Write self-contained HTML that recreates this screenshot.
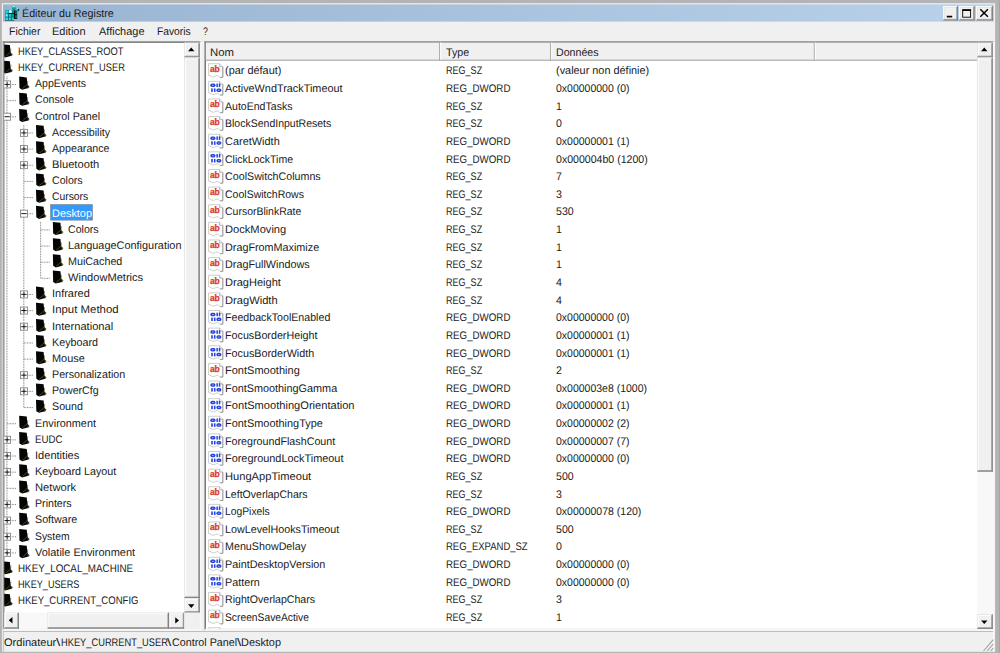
<!DOCTYPE html>
<html lang="fr"><head><meta charset="utf-8"><title>Éditeur du Registre</title>
<style>
html,body{margin:0;padding:0;}
body{width:1000px;height:653px;overflow:hidden;background:#b4b4b4;position:relative;font-family:"Liberation Sans",sans-serif;color:#1a1a1a;}
.t{position:absolute;white-space:pre;font-size:11px;line-height:12.65px;height:12.65px;transform-origin:0 0;display:block;}
svg{position:absolute;left:0;top:0;}
</style></head><body>
<svg width="1000" height="653" viewBox="0 0 1000 653">
<rect x="0.00" y="0.00" width="1000.00" height="653.00" fill="#b4b4b4"/>
<rect x="999.00" y="0.00" width="1.00" height="653.00" fill="#a6a6a6"/>
<rect x="1.90" y="3.20" width="993.20" height="648.60" fill="#f0f0f0"/>
<defs><linearGradient id="tg" x1="0" x2="1" y1="0" y2="0"><stop offset="0" stop-color="#99b4d1"/><stop offset="1" stop-color="#b9d1ea"/></linearGradient></defs>
<rect x="3" y="4.4" width="991" height="17.2" fill="url(#tg)"/>
<rect x="943.00" y="6.10" width="14.80" height="14.40" fill="#f0f0f0"/>
<rect x="943.00" y="6.10" width="14.00" height="0.80" fill="#fff"/>
<rect x="943.00" y="6.10" width="0.80" height="13.60" fill="#fff"/>
<rect x="943.80" y="6.90" width="12.40" height="0.80" fill="#e3e3e3"/>
<rect x="943.80" y="6.90" width="0.80" height="12.00" fill="#e3e3e3"/>
<rect x="956.20" y="6.90" width="0.80" height="12.80" fill="#a0a0a0"/>
<rect x="943.80" y="18.90" width="13.20" height="0.80" fill="#a0a0a0"/>
<rect x="957.00" y="6.10" width="0.80" height="14.40" fill="#696969"/>
<rect x="943.00" y="19.70" width="14.80" height="0.80" fill="#696969"/>
<rect x="959.00" y="6.10" width="15.60" height="14.40" fill="#f0f0f0"/>
<rect x="959.00" y="6.10" width="14.80" height="0.80" fill="#fff"/>
<rect x="959.00" y="6.10" width="0.80" height="13.60" fill="#fff"/>
<rect x="959.80" y="6.90" width="13.20" height="0.80" fill="#e3e3e3"/>
<rect x="959.80" y="6.90" width="0.80" height="12.00" fill="#e3e3e3"/>
<rect x="973.00" y="6.90" width="0.80" height="12.80" fill="#a0a0a0"/>
<rect x="959.80" y="18.90" width="14.00" height="0.80" fill="#a0a0a0"/>
<rect x="973.80" y="6.10" width="0.80" height="14.40" fill="#696969"/>
<rect x="959.00" y="19.70" width="15.60" height="0.80" fill="#696969"/>
<rect x="976.20" y="6.10" width="16.60" height="14.40" fill="#f0f0f0"/>
<rect x="976.20" y="6.10" width="15.80" height="0.80" fill="#fff"/>
<rect x="976.20" y="6.10" width="0.80" height="13.60" fill="#fff"/>
<rect x="977.00" y="6.90" width="14.20" height="0.80" fill="#e3e3e3"/>
<rect x="977.00" y="6.90" width="0.80" height="12.00" fill="#e3e3e3"/>
<rect x="991.20" y="6.90" width="0.80" height="12.80" fill="#a0a0a0"/>
<rect x="977.00" y="18.90" width="15.00" height="0.80" fill="#a0a0a0"/>
<rect x="992.00" y="6.10" width="0.80" height="14.40" fill="#696969"/>
<rect x="976.20" y="19.70" width="16.60" height="0.80" fill="#696969"/>
<path d="M946.8 16.6 h5.4" stroke="#000" stroke-width="1.7"/><rect x="962.7" y="10" width="7.9" height="7.2" fill="none" stroke="#000" stroke-width="0.9"/><path d="M962.25 10.1 h8.8" stroke="#000" stroke-width="1.7"/><path d="M980.3 9.3 l7.6 7.4 M987.9 9.3 l-7.6 7.4" stroke="#000" stroke-width="1.5"/>
<rect x="2.60" y="41.00" width="198.80" height="589.20" fill="#fff"/>
<rect x="2.60" y="41.00" width="198.80" height="0.90" fill="#a0a0a0"/>
<rect x="2.60" y="41.00" width="0.90" height="589.20" fill="#a0a0a0"/>
<rect x="3.50" y="41.90" width="197.00" height="0.90" fill="#696969"/>
<rect x="3.50" y="41.90" width="0.90" height="587.40" fill="#696969"/>
<rect x="199.60" y="41.90" width="0.90" height="587.40" fill="#e8e8e8"/>
<rect x="3.50" y="628.40" width="197.00" height="0.90" fill="#e8e8e8"/>
<rect x="200.50" y="41.00" width="0.90" height="589.20" fill="#f8f8f8"/>
<rect x="2.60" y="629.30" width="198.80" height="0.90" fill="#f8f8f8"/>
<rect x="204.20" y="41.00" width="790.10" height="589.40" fill="#fff"/>
<rect x="204.20" y="41.00" width="790.10" height="0.90" fill="#a0a0a0"/>
<rect x="204.20" y="41.00" width="0.90" height="589.40" fill="#a0a0a0"/>
<rect x="205.10" y="41.90" width="788.30" height="0.90" fill="#696969"/>
<rect x="205.10" y="41.90" width="0.90" height="587.60" fill="#696969"/>
<rect x="992.50" y="41.90" width="0.90" height="587.60" fill="#e8e8e8"/>
<rect x="205.10" y="628.60" width="788.30" height="0.90" fill="#e8e8e8"/>
<rect x="993.40" y="41.00" width="0.90" height="589.40" fill="#f8f8f8"/>
<rect x="204.20" y="629.50" width="790.10" height="0.90" fill="#f8f8f8"/>
<rect x="205.80" y="42.60" width="771.50" height="18.10" fill="#f0f0f0"/>
<rect x="205.80" y="59.70" width="771.50" height="1.00" fill="#a0a0a0"/>
<rect x="439.20" y="42.60" width="1.00" height="18.10" fill="#a0a0a0"/>
<rect x="440.20" y="42.60" width="1.00" height="17.10" fill="#fff"/>
<rect x="550.20" y="42.60" width="1.00" height="18.10" fill="#a0a0a0"/>
<rect x="551.20" y="42.60" width="1.00" height="17.10" fill="#fff"/>
<rect x="813.80" y="42.60" width="1.00" height="18.10" fill="#a0a0a0"/>
<rect x="814.80" y="42.60" width="1.00" height="17.10" fill="#fff"/>
<rect x="184.30" y="42.80" width="15.40" height="569.80" fill="#f8f8f8"/>
<rect x="184.30" y="42.80" width="15.40" height="14.50" fill="#f0f0f0"/>
<rect x="184.30" y="42.80" width="14.60" height="0.80" fill="#e3e3e3"/>
<rect x="184.30" y="42.80" width="0.80" height="13.70" fill="#e3e3e3"/>
<rect x="185.10" y="43.60" width="13.00" height="0.80" fill="#fff"/>
<rect x="185.10" y="43.60" width="0.80" height="12.10" fill="#fff"/>
<rect x="198.10" y="43.60" width="0.80" height="12.90" fill="#a0a0a0"/>
<rect x="185.10" y="55.70" width="13.80" height="0.80" fill="#a0a0a0"/>
<rect x="198.90" y="42.80" width="0.80" height="14.50" fill="#696969"/>
<rect x="184.30" y="56.50" width="15.40" height="0.80" fill="#696969"/>
<rect x="184.30" y="57.80" width="15.40" height="540.30" fill="#f0f0f0"/>
<rect x="184.30" y="57.80" width="14.60" height="0.80" fill="#e3e3e3"/>
<rect x="184.30" y="57.80" width="0.80" height="539.50" fill="#e3e3e3"/>
<rect x="185.10" y="58.60" width="13.00" height="0.80" fill="#fff"/>
<rect x="185.10" y="58.60" width="0.80" height="537.90" fill="#fff"/>
<rect x="198.10" y="58.60" width="0.80" height="538.70" fill="#a0a0a0"/>
<rect x="185.10" y="596.50" width="13.80" height="0.80" fill="#a0a0a0"/>
<rect x="198.90" y="57.80" width="0.80" height="540.30" fill="#696969"/>
<rect x="184.30" y="597.30" width="15.40" height="0.80" fill="#696969"/>
<rect x="184.30" y="598.10" width="15.40" height="14.50" fill="#f0f0f0"/>
<rect x="184.30" y="598.10" width="14.60" height="0.80" fill="#e3e3e3"/>
<rect x="184.30" y="598.10" width="0.80" height="13.70" fill="#e3e3e3"/>
<rect x="185.10" y="598.90" width="13.00" height="0.80" fill="#fff"/>
<rect x="185.10" y="598.90" width="0.80" height="12.10" fill="#fff"/>
<rect x="198.10" y="598.90" width="0.80" height="12.90" fill="#a0a0a0"/>
<rect x="185.10" y="611.00" width="13.80" height="0.80" fill="#a0a0a0"/>
<rect x="198.90" y="598.10" width="0.80" height="14.50" fill="#696969"/>
<rect x="184.30" y="611.80" width="15.40" height="0.80" fill="#696969"/>
<path d="M191.25 47.60 l3.20 3.70 h-6.40z" fill="#000"/>
<path d="M191.25 607.90 l3.20 -3.70 h-6.40z" fill="#000"/>
<rect x="977.30" y="42.80" width="15.40" height="586.00" fill="#f8f8f8"/>
<rect x="977.30" y="42.80" width="15.40" height="14.50" fill="#f0f0f0"/>
<rect x="977.30" y="42.80" width="14.60" height="0.80" fill="#e3e3e3"/>
<rect x="977.30" y="42.80" width="0.80" height="13.70" fill="#e3e3e3"/>
<rect x="978.10" y="43.60" width="13.00" height="0.80" fill="#fff"/>
<rect x="978.10" y="43.60" width="0.80" height="12.10" fill="#fff"/>
<rect x="991.10" y="43.60" width="0.80" height="12.90" fill="#a0a0a0"/>
<rect x="978.10" y="55.70" width="13.80" height="0.80" fill="#a0a0a0"/>
<rect x="991.90" y="42.80" width="0.80" height="14.50" fill="#696969"/>
<rect x="977.30" y="56.50" width="15.40" height="0.80" fill="#696969"/>
<rect x="977.30" y="57.80" width="15.40" height="413.80" fill="#f0f0f0"/>
<rect x="977.30" y="57.80" width="14.60" height="0.80" fill="#e3e3e3"/>
<rect x="977.30" y="57.80" width="0.80" height="413.00" fill="#e3e3e3"/>
<rect x="978.10" y="58.60" width="13.00" height="0.80" fill="#fff"/>
<rect x="978.10" y="58.60" width="0.80" height="411.40" fill="#fff"/>
<rect x="991.10" y="58.60" width="0.80" height="412.20" fill="#a0a0a0"/>
<rect x="978.10" y="470.00" width="13.80" height="0.80" fill="#a0a0a0"/>
<rect x="991.90" y="57.80" width="0.80" height="413.80" fill="#696969"/>
<rect x="977.30" y="470.80" width="15.40" height="0.80" fill="#696969"/>
<rect x="977.30" y="614.30" width="15.40" height="14.50" fill="#f0f0f0"/>
<rect x="977.30" y="614.30" width="14.60" height="0.80" fill="#e3e3e3"/>
<rect x="977.30" y="614.30" width="0.80" height="13.70" fill="#e3e3e3"/>
<rect x="978.10" y="615.10" width="13.00" height="0.80" fill="#fff"/>
<rect x="978.10" y="615.10" width="0.80" height="12.10" fill="#fff"/>
<rect x="991.10" y="615.10" width="0.80" height="12.90" fill="#a0a0a0"/>
<rect x="978.10" y="627.20" width="13.80" height="0.80" fill="#a0a0a0"/>
<rect x="991.90" y="614.30" width="0.80" height="14.50" fill="#696969"/>
<rect x="977.30" y="628.00" width="15.40" height="0.80" fill="#696969"/>
<path d="M984.25 47.60 l3.20 3.70 h-6.40z" fill="#000"/>
<path d="M984.25 624.10 l3.20 -3.70 h-6.40z" fill="#000"/>
<rect x="4.20" y="612.60" width="180.10" height="16.00" fill="#f8f8f8"/>
<rect x="4.20" y="612.60" width="14.70" height="16.00" fill="#f0f0f0"/>
<rect x="4.20" y="612.60" width="13.90" height="0.80" fill="#e3e3e3"/>
<rect x="4.20" y="612.60" width="0.80" height="15.20" fill="#e3e3e3"/>
<rect x="5.00" y="613.40" width="12.30" height="0.80" fill="#fff"/>
<rect x="5.00" y="613.40" width="0.80" height="13.60" fill="#fff"/>
<rect x="17.30" y="613.40" width="0.80" height="14.40" fill="#a0a0a0"/>
<rect x="5.00" y="627.00" width="13.10" height="0.80" fill="#a0a0a0"/>
<rect x="18.10" y="612.60" width="0.80" height="16.00" fill="#696969"/>
<rect x="4.20" y="627.80" width="14.70" height="0.80" fill="#696969"/>
<rect x="47.50" y="612.60" width="121.50" height="16.00" fill="#f0f0f0"/>
<rect x="47.50" y="612.60" width="120.70" height="0.80" fill="#e3e3e3"/>
<rect x="47.50" y="612.60" width="0.80" height="15.20" fill="#e3e3e3"/>
<rect x="48.30" y="613.40" width="119.10" height="0.80" fill="#fff"/>
<rect x="48.30" y="613.40" width="0.80" height="13.60" fill="#fff"/>
<rect x="167.40" y="613.40" width="0.80" height="14.40" fill="#a0a0a0"/>
<rect x="48.30" y="627.00" width="119.90" height="0.80" fill="#a0a0a0"/>
<rect x="168.20" y="612.60" width="0.80" height="16.00" fill="#696969"/>
<rect x="47.50" y="627.80" width="121.50" height="0.80" fill="#696969"/>
<rect x="169.00" y="612.60" width="15.30" height="16.00" fill="#f0f0f0"/>
<rect x="169.00" y="612.60" width="14.50" height="0.80" fill="#e3e3e3"/>
<rect x="169.00" y="612.60" width="0.80" height="15.20" fill="#e3e3e3"/>
<rect x="169.80" y="613.40" width="12.90" height="0.80" fill="#fff"/>
<rect x="169.80" y="613.40" width="0.80" height="13.60" fill="#fff"/>
<rect x="182.70" y="613.40" width="0.80" height="14.40" fill="#a0a0a0"/>
<rect x="169.80" y="627.00" width="13.70" height="0.80" fill="#a0a0a0"/>
<rect x="183.50" y="612.60" width="0.80" height="16.00" fill="#696969"/>
<rect x="169.00" y="627.80" width="15.30" height="0.80" fill="#696969"/>
<path d="M8.75 620.20 l3.70 3.20 v-6.40z" fill="#000"/>
<path d="M178.95 620.40 l-3.70 3.20 v-6.40z" fill="#000"/>
<rect x="184.30" y="612.60" width="15.50" height="16.00" fill="#f0f0f0"/>
<rect x="2.90" y="631.00" width="990.10" height="0.90" fill="#b8b8b8"/>
<rect x="2.90" y="631.00" width="0.80" height="20.80" fill="#b8b8b8"/>
<rect x="993.20" y="631.80" width="0.80" height="20.00" fill="#fff"/>
<path d="M983.5 651 L993.3 639.6 M987.2 651 L993.3 644 M990.8 651 L993.3 648.2" stroke="#a0a0a0" stroke-width="1.1" fill="none"/>
<defs><clipPath id="tc"><rect x="4.2" y="42.6" width="180.1" height="570"/></clipPath><g id="fold"><path d="M0.4 0.3 L8.0 1.1 L8.7 8.2 L10.4 10.4 L9.6 11.8 L3.4 13.4 L0.7 11.8Z" fill="#050505"/><path d="M8.8 8.6 L11.2 10.2 L10.2 12 L8.6 12.2Z" fill="#555" opacity=".5"/><path d="M3.6 12.4 L8.6 8.2" stroke="#55701a" stroke-width="0.7"/><path d="M8.6 8.2 L9 4.6" stroke="#7a3c14" stroke-width="0.6"/></g></defs>
<g clip-path="url(#tc)">
<path d="M6.95 76.51 L6.95 552.94" stroke="#6c6c6c" stroke-width="0.9" stroke-dasharray="0.85 0.765" fill="none"/>
<path d="M23.80 124.96 L23.80 407.57" stroke="#6c6c6c" stroke-width="0.9" stroke-dasharray="0.85 0.765" fill="none"/>
<path d="M40.65 221.88 L40.65 278.34" stroke="#6c6c6c" stroke-width="0.9" stroke-dasharray="0.85 0.765" fill="none"/>
<use href="#fold" x="1.90" y="44.00"/>
<use href="#fold" x="1.90" y="60.15"/>
<path d="M6.95 84.51 L16.15 84.51" stroke="#6c6c6c" stroke-width="0.9" stroke-dasharray="0.85 0.765" fill="none"/>
<use href="#fold" x="18.75" y="76.31"/>
<rect x="3.60" y="80.91" width="7" height="7" fill="#fff" stroke="#808080" stroke-width="0.85"/>
<path d="M4.40 84.41 h5.4" stroke="#000" stroke-width="0.9"/>
<path d="M7.10 81.71 v5.4" stroke="#000" stroke-width="0.9"/>
<path d="M6.95 100.66 L16.15 100.66" stroke="#6c6c6c" stroke-width="0.9" stroke-dasharray="0.85 0.765" fill="none"/>
<use href="#fold" x="18.75" y="92.46"/>
<path d="M6.95 116.81 L16.15 116.81" stroke="#6c6c6c" stroke-width="0.9" stroke-dasharray="0.85 0.765" fill="none"/>
<use href="#fold" x="18.75" y="108.61"/>
<rect x="3.60" y="113.21" width="7" height="7" fill="#fff" stroke="#808080" stroke-width="0.85"/>
<path d="M4.40 116.71 h5.4" stroke="#000" stroke-width="0.9"/>
<path d="M23.80 132.96 L33.00 132.96" stroke="#6c6c6c" stroke-width="0.9" stroke-dasharray="0.85 0.765" fill="none"/>
<use href="#fold" x="35.60" y="124.76"/>
<rect x="20.45" y="129.36" width="7" height="7" fill="#fff" stroke="#808080" stroke-width="0.85"/>
<path d="M21.25 132.86 h5.4" stroke="#000" stroke-width="0.9"/>
<path d="M23.95 130.16 v5.4" stroke="#000" stroke-width="0.9"/>
<path d="M23.80 149.12 L33.00 149.12" stroke="#6c6c6c" stroke-width="0.9" stroke-dasharray="0.85 0.765" fill="none"/>
<use href="#fold" x="35.60" y="140.92"/>
<rect x="20.45" y="145.52" width="7" height="7" fill="#fff" stroke="#808080" stroke-width="0.85"/>
<path d="M21.25 149.02 h5.4" stroke="#000" stroke-width="0.9"/>
<path d="M23.95 146.32 v5.4" stroke="#000" stroke-width="0.9"/>
<path d="M23.80 165.27 L33.00 165.27" stroke="#6c6c6c" stroke-width="0.9" stroke-dasharray="0.85 0.765" fill="none"/>
<use href="#fold" x="35.60" y="157.07"/>
<rect x="20.45" y="161.67" width="7" height="7" fill="#fff" stroke="#808080" stroke-width="0.85"/>
<path d="M21.25 165.17 h5.4" stroke="#000" stroke-width="0.9"/>
<path d="M23.95 162.47 v5.4" stroke="#000" stroke-width="0.9"/>
<path d="M23.80 181.42 L33.00 181.42" stroke="#6c6c6c" stroke-width="0.9" stroke-dasharray="0.85 0.765" fill="none"/>
<use href="#fold" x="35.60" y="173.22"/>
<path d="M23.80 197.58 L33.00 197.58" stroke="#6c6c6c" stroke-width="0.9" stroke-dasharray="0.85 0.765" fill="none"/>
<use href="#fold" x="35.60" y="189.38"/>
<path d="M23.80 213.73 L33.00 213.73" stroke="#6c6c6c" stroke-width="0.9" stroke-dasharray="0.85 0.765" fill="none"/>
<use href="#fold" x="35.60" y="205.53"/>
<rect x="20.45" y="210.13" width="7" height="7" fill="#fff" stroke="#808080" stroke-width="0.85"/>
<path d="M21.25 213.63 h5.4" stroke="#000" stroke-width="0.9"/>
<path d="M40.65 229.88 L49.85 229.88" stroke="#6c6c6c" stroke-width="0.9" stroke-dasharray="0.85 0.765" fill="none"/>
<use href="#fold" x="52.45" y="221.68"/>
<path d="M40.65 246.04 L49.85 246.04" stroke="#6c6c6c" stroke-width="0.9" stroke-dasharray="0.85 0.765" fill="none"/>
<use href="#fold" x="52.45" y="237.84"/>
<path d="M40.65 262.19 L49.85 262.19" stroke="#6c6c6c" stroke-width="0.9" stroke-dasharray="0.85 0.765" fill="none"/>
<use href="#fold" x="52.45" y="253.99"/>
<path d="M40.65 278.34 L49.85 278.34" stroke="#6c6c6c" stroke-width="0.9" stroke-dasharray="0.85 0.765" fill="none"/>
<use href="#fold" x="52.45" y="270.14"/>
<path d="M23.80 294.50 L33.00 294.50" stroke="#6c6c6c" stroke-width="0.9" stroke-dasharray="0.85 0.765" fill="none"/>
<use href="#fold" x="35.60" y="286.30"/>
<rect x="20.45" y="290.89" width="7" height="7" fill="#fff" stroke="#808080" stroke-width="0.85"/>
<path d="M21.25 294.39 h5.4" stroke="#000" stroke-width="0.9"/>
<path d="M23.95 291.69 v5.4" stroke="#000" stroke-width="0.9"/>
<path d="M23.80 310.65 L33.00 310.65" stroke="#6c6c6c" stroke-width="0.9" stroke-dasharray="0.85 0.765" fill="none"/>
<use href="#fold" x="35.60" y="302.45"/>
<rect x="20.45" y="307.05" width="7" height="7" fill="#fff" stroke="#808080" stroke-width="0.85"/>
<path d="M21.25 310.55 h5.4" stroke="#000" stroke-width="0.9"/>
<path d="M23.95 307.85 v5.4" stroke="#000" stroke-width="0.9"/>
<path d="M23.80 326.80 L33.00 326.80" stroke="#6c6c6c" stroke-width="0.9" stroke-dasharray="0.85 0.765" fill="none"/>
<use href="#fold" x="35.60" y="318.60"/>
<rect x="20.45" y="323.20" width="7" height="7" fill="#fff" stroke="#808080" stroke-width="0.85"/>
<path d="M21.25 326.70 h5.4" stroke="#000" stroke-width="0.9"/>
<path d="M23.95 324.00 v5.4" stroke="#000" stroke-width="0.9"/>
<path d="M23.80 342.95 L33.00 342.95" stroke="#6c6c6c" stroke-width="0.9" stroke-dasharray="0.85 0.765" fill="none"/>
<use href="#fold" x="35.60" y="334.75"/>
<path d="M23.80 359.11 L33.00 359.11" stroke="#6c6c6c" stroke-width="0.9" stroke-dasharray="0.85 0.765" fill="none"/>
<use href="#fold" x="35.60" y="350.91"/>
<path d="M23.80 375.26 L33.00 375.26" stroke="#6c6c6c" stroke-width="0.9" stroke-dasharray="0.85 0.765" fill="none"/>
<use href="#fold" x="35.60" y="367.06"/>
<rect x="20.45" y="371.66" width="7" height="7" fill="#fff" stroke="#808080" stroke-width="0.85"/>
<path d="M21.25 375.16 h5.4" stroke="#000" stroke-width="0.9"/>
<path d="M23.95 372.46 v5.4" stroke="#000" stroke-width="0.9"/>
<path d="M23.80 391.41 L33.00 391.41" stroke="#6c6c6c" stroke-width="0.9" stroke-dasharray="0.85 0.765" fill="none"/>
<use href="#fold" x="35.60" y="383.21"/>
<rect x="20.45" y="387.81" width="7" height="7" fill="#fff" stroke="#808080" stroke-width="0.85"/>
<path d="M21.25 391.31 h5.4" stroke="#000" stroke-width="0.9"/>
<path d="M23.95 388.61 v5.4" stroke="#000" stroke-width="0.9"/>
<path d="M23.80 407.57 L33.00 407.57" stroke="#6c6c6c" stroke-width="0.9" stroke-dasharray="0.85 0.765" fill="none"/>
<use href="#fold" x="35.60" y="399.37"/>
<path d="M6.95 423.72 L16.15 423.72" stroke="#6c6c6c" stroke-width="0.9" stroke-dasharray="0.85 0.765" fill="none"/>
<use href="#fold" x="18.75" y="415.52"/>
<path d="M6.95 439.87 L16.15 439.87" stroke="#6c6c6c" stroke-width="0.9" stroke-dasharray="0.85 0.765" fill="none"/>
<use href="#fold" x="18.75" y="431.67"/>
<rect x="3.60" y="436.27" width="7" height="7" fill="#fff" stroke="#808080" stroke-width="0.85"/>
<path d="M4.40 439.77 h5.4" stroke="#000" stroke-width="0.9"/>
<path d="M7.10 437.07 v5.4" stroke="#000" stroke-width="0.9"/>
<path d="M6.95 456.02 L16.15 456.02" stroke="#6c6c6c" stroke-width="0.9" stroke-dasharray="0.85 0.765" fill="none"/>
<use href="#fold" x="18.75" y="447.82"/>
<rect x="3.60" y="452.42" width="7" height="7" fill="#fff" stroke="#808080" stroke-width="0.85"/>
<path d="M4.40 455.92 h5.4" stroke="#000" stroke-width="0.9"/>
<path d="M7.10 453.22 v5.4" stroke="#000" stroke-width="0.9"/>
<path d="M6.95 472.18 L16.15 472.18" stroke="#6c6c6c" stroke-width="0.9" stroke-dasharray="0.85 0.765" fill="none"/>
<use href="#fold" x="18.75" y="463.98"/>
<rect x="3.60" y="468.58" width="7" height="7" fill="#fff" stroke="#808080" stroke-width="0.85"/>
<path d="M4.40 472.08 h5.4" stroke="#000" stroke-width="0.9"/>
<path d="M7.10 469.38 v5.4" stroke="#000" stroke-width="0.9"/>
<path d="M6.95 488.33 L16.15 488.33" stroke="#6c6c6c" stroke-width="0.9" stroke-dasharray="0.85 0.765" fill="none"/>
<use href="#fold" x="18.75" y="480.13"/>
<path d="M6.95 504.48 L16.15 504.48" stroke="#6c6c6c" stroke-width="0.9" stroke-dasharray="0.85 0.765" fill="none"/>
<use href="#fold" x="18.75" y="496.28"/>
<rect x="3.60" y="500.88" width="7" height="7" fill="#fff" stroke="#808080" stroke-width="0.85"/>
<path d="M4.40 504.38 h5.4" stroke="#000" stroke-width="0.9"/>
<path d="M7.10 501.68 v5.4" stroke="#000" stroke-width="0.9"/>
<path d="M6.95 520.64 L16.15 520.64" stroke="#6c6c6c" stroke-width="0.9" stroke-dasharray="0.85 0.765" fill="none"/>
<use href="#fold" x="18.75" y="512.44"/>
<rect x="3.60" y="517.04" width="7" height="7" fill="#fff" stroke="#808080" stroke-width="0.85"/>
<path d="M4.40 520.54 h5.4" stroke="#000" stroke-width="0.9"/>
<path d="M7.10 517.84 v5.4" stroke="#000" stroke-width="0.9"/>
<path d="M6.95 536.79 L16.15 536.79" stroke="#6c6c6c" stroke-width="0.9" stroke-dasharray="0.85 0.765" fill="none"/>
<use href="#fold" x="18.75" y="528.59"/>
<rect x="3.60" y="533.19" width="7" height="7" fill="#fff" stroke="#808080" stroke-width="0.85"/>
<path d="M4.40 536.69 h5.4" stroke="#000" stroke-width="0.9"/>
<path d="M7.10 533.99 v5.4" stroke="#000" stroke-width="0.9"/>
<path d="M6.95 552.94 L16.15 552.94" stroke="#6c6c6c" stroke-width="0.9" stroke-dasharray="0.85 0.765" fill="none"/>
<use href="#fold" x="18.75" y="544.74"/>
<rect x="3.60" y="549.34" width="7" height="7" fill="#fff" stroke="#808080" stroke-width="0.85"/>
<path d="M4.40 552.84 h5.4" stroke="#000" stroke-width="0.9"/>
<path d="M7.10 550.14 v5.4" stroke="#000" stroke-width="0.9"/>
<use href="#fold" x="1.90" y="560.90"/>
<use href="#fold" x="1.90" y="577.05"/>
<use href="#fold" x="1.90" y="593.20"/>
</g>
<rect x="50.3" y="204.3" width="42.4" height="16.1" fill="#3399ff"/><rect x="50.7" y="204.7" width="41.6" height="15.3" fill="none" stroke="#b87a3a" stroke-width="0.9" stroke-dasharray="0.85 0.765"/>
<defs>
<g id="pg"><path d="M0.4 0.4 H11.4 L14.6 3.4 V14.1 H12 C10.8 14.1 10.6 12.3 9.2 12.3 C7.4 12.4 6.8 13.7 5 13.7 C3.4 13.7 2.6 12 0.4 12 Z" fill="#fff" stroke="#c2c2c2" stroke-width="0.8"/><path d="M14.6 3.4 V14.1 H12" fill="none" stroke="#8c8c8c" stroke-width="0.8"/><path d="M11.4 0.4 V3.4 H14.6" fill="#f2f2f2" stroke="#a0a0a0" stroke-width="0.7"/></g>
<g id="bn" fill="#2443e2"><rect x="2.1" y="2.6" width="5.2" height="3.5" rx="1.7"/><rect x="4" y="3.9" width="1.4" height=".9" rx=".4" fill="#dfe6ff"/><rect x="8.2" y="2.6" width="1.5" height="3.5"/><rect x="10.6" y="2.6" width="1.5" height="3.5"/>
<rect x="3.0" y="7.5" width="1.6" height="3.5"/><rect x="5.7" y="7.5" width="1.6" height="3.5"/><rect x="8.2" y="7.5" width="5" height="3.5" rx="1.7"/><rect x="10" y="8.8" width="1.4" height=".9" rx=".4" fill="#dfe6ff"/></g>
</defs>
<use href="#pg" x="208.2" y="63.30"/>
<text x="209.9" y="72.00" font-family="Liberation Sans,sans-serif" font-weight="bold" font-size="8.2" fill="#d8391f" stroke="#d8391f" stroke-width=".25" textLength="9.9" lengthAdjust="spacingAndGlyphs">ab</text>
<use href="#pg" x="208.2" y="80.93"/>
<use href="#bn" x="208.2" y="80.93"/>
<use href="#pg" x="208.2" y="98.55"/>
<text x="209.9" y="107.25" font-family="Liberation Sans,sans-serif" font-weight="bold" font-size="8.2" fill="#d8391f" stroke="#d8391f" stroke-width=".25" textLength="9.9" lengthAdjust="spacingAndGlyphs">ab</text>
<use href="#pg" x="208.2" y="116.18"/>
<text x="209.9" y="124.88" font-family="Liberation Sans,sans-serif" font-weight="bold" font-size="8.2" fill="#d8391f" stroke="#d8391f" stroke-width=".25" textLength="9.9" lengthAdjust="spacingAndGlyphs">ab</text>
<use href="#pg" x="208.2" y="133.81"/>
<use href="#bn" x="208.2" y="133.81"/>
<use href="#pg" x="208.2" y="151.43"/>
<use href="#bn" x="208.2" y="151.43"/>
<use href="#pg" x="208.2" y="169.06"/>
<text x="209.9" y="177.76" font-family="Liberation Sans,sans-serif" font-weight="bold" font-size="8.2" fill="#d8391f" stroke="#d8391f" stroke-width=".25" textLength="9.9" lengthAdjust="spacingAndGlyphs">ab</text>
<use href="#pg" x="208.2" y="186.69"/>
<text x="209.9" y="195.39" font-family="Liberation Sans,sans-serif" font-weight="bold" font-size="8.2" fill="#d8391f" stroke="#d8391f" stroke-width=".25" textLength="9.9" lengthAdjust="spacingAndGlyphs">ab</text>
<use href="#pg" x="208.2" y="204.32"/>
<text x="209.9" y="213.02" font-family="Liberation Sans,sans-serif" font-weight="bold" font-size="8.2" fill="#d8391f" stroke="#d8391f" stroke-width=".25" textLength="9.9" lengthAdjust="spacingAndGlyphs">ab</text>
<use href="#pg" x="208.2" y="221.94"/>
<text x="209.9" y="230.64" font-family="Liberation Sans,sans-serif" font-weight="bold" font-size="8.2" fill="#d8391f" stroke="#d8391f" stroke-width=".25" textLength="9.9" lengthAdjust="spacingAndGlyphs">ab</text>
<use href="#pg" x="208.2" y="239.57"/>
<text x="209.9" y="248.27" font-family="Liberation Sans,sans-serif" font-weight="bold" font-size="8.2" fill="#d8391f" stroke="#d8391f" stroke-width=".25" textLength="9.9" lengthAdjust="spacingAndGlyphs">ab</text>
<use href="#pg" x="208.2" y="257.20"/>
<text x="209.9" y="265.90" font-family="Liberation Sans,sans-serif" font-weight="bold" font-size="8.2" fill="#d8391f" stroke="#d8391f" stroke-width=".25" textLength="9.9" lengthAdjust="spacingAndGlyphs">ab</text>
<use href="#pg" x="208.2" y="274.82"/>
<text x="209.9" y="283.52" font-family="Liberation Sans,sans-serif" font-weight="bold" font-size="8.2" fill="#d8391f" stroke="#d8391f" stroke-width=".25" textLength="9.9" lengthAdjust="spacingAndGlyphs">ab</text>
<use href="#pg" x="208.2" y="292.45"/>
<text x="209.9" y="301.15" font-family="Liberation Sans,sans-serif" font-weight="bold" font-size="8.2" fill="#d8391f" stroke="#d8391f" stroke-width=".25" textLength="9.9" lengthAdjust="spacingAndGlyphs">ab</text>
<use href="#pg" x="208.2" y="310.08"/>
<use href="#bn" x="208.2" y="310.08"/>
<use href="#pg" x="208.2" y="327.70"/>
<use href="#bn" x="208.2" y="327.70"/>
<use href="#pg" x="208.2" y="345.33"/>
<use href="#bn" x="208.2" y="345.33"/>
<use href="#pg" x="208.2" y="362.96"/>
<text x="209.9" y="371.66" font-family="Liberation Sans,sans-serif" font-weight="bold" font-size="8.2" fill="#d8391f" stroke="#d8391f" stroke-width=".25" textLength="9.9" lengthAdjust="spacingAndGlyphs">ab</text>
<use href="#pg" x="208.2" y="380.59"/>
<use href="#bn" x="208.2" y="380.59"/>
<use href="#pg" x="208.2" y="398.21"/>
<use href="#bn" x="208.2" y="398.21"/>
<use href="#pg" x="208.2" y="415.84"/>
<use href="#bn" x="208.2" y="415.84"/>
<use href="#pg" x="208.2" y="433.47"/>
<use href="#bn" x="208.2" y="433.47"/>
<use href="#pg" x="208.2" y="451.09"/>
<use href="#bn" x="208.2" y="451.09"/>
<use href="#pg" x="208.2" y="468.72"/>
<text x="209.9" y="477.42" font-family="Liberation Sans,sans-serif" font-weight="bold" font-size="8.2" fill="#d8391f" stroke="#d8391f" stroke-width=".25" textLength="9.9" lengthAdjust="spacingAndGlyphs">ab</text>
<use href="#pg" x="208.2" y="486.35"/>
<text x="209.9" y="495.05" font-family="Liberation Sans,sans-serif" font-weight="bold" font-size="8.2" fill="#d8391f" stroke="#d8391f" stroke-width=".25" textLength="9.9" lengthAdjust="spacingAndGlyphs">ab</text>
<use href="#pg" x="208.2" y="503.97"/>
<use href="#bn" x="208.2" y="503.97"/>
<use href="#pg" x="208.2" y="521.60"/>
<text x="209.9" y="530.30" font-family="Liberation Sans,sans-serif" font-weight="bold" font-size="8.2" fill="#d8391f" stroke="#d8391f" stroke-width=".25" textLength="9.9" lengthAdjust="spacingAndGlyphs">ab</text>
<use href="#pg" x="208.2" y="539.23"/>
<text x="209.9" y="547.93" font-family="Liberation Sans,sans-serif" font-weight="bold" font-size="8.2" fill="#d8391f" stroke="#d8391f" stroke-width=".25" textLength="9.9" lengthAdjust="spacingAndGlyphs">ab</text>
<use href="#pg" x="208.2" y="556.86"/>
<use href="#bn" x="208.2" y="556.86"/>
<use href="#pg" x="208.2" y="574.48"/>
<use href="#bn" x="208.2" y="574.48"/>
<use href="#pg" x="208.2" y="592.11"/>
<text x="209.9" y="600.81" font-family="Liberation Sans,sans-serif" font-weight="bold" font-size="8.2" fill="#d8391f" stroke="#d8391f" stroke-width=".25" textLength="9.9" lengthAdjust="spacingAndGlyphs">ab</text>
<use href="#pg" x="208.2" y="609.74"/>
<text x="209.9" y="618.44" font-family="Liberation Sans,sans-serif" font-weight="bold" font-size="8.2" fill="#d8391f" stroke="#d8391f" stroke-width=".25" textLength="9.9" lengthAdjust="spacingAndGlyphs">ab</text>
<clipPath id="lc"><rect x="205" y="60" width="772" height="568.8"/></clipPath><g clip-path="url(#lc)"><use href="#pg" x="208.2" y="627.36"/></g>
<g>
<rect x="5.2" y="20.2" width="9.2" height=".7" fill="#3a4650"/>
<rect x="5.3" y="9.9" width="8.7" height="10.4" fill="#0f8a8d"/>
<rect x="13.8" y="10.4" width="3.4" height="8.6" fill="#031416"/>
<rect x="8.4" y="12.9" width="5.8" height="1.1" fill="#041a1c"/><rect x="5.3" y="16.7" width="8.6" height=".8" fill="#0a5558"/>
<rect x="8.2" y="13.5" width=".8" height="6.6" fill="#0a5558"/><rect x="11.1" y="13.5" width=".8" height="6.6" fill="#0a4a4d"/>
<rect x="5.7" y="10.3" width="2.8" height="2.8" fill="#19d2d2"/><rect x="9.1" y="10.2" width="2.6" height="2.7" fill="#e9ffff"/><rect x="12.2" y="10.4" width="1.7" height="2.4" fill="#0c8f92"/>
<rect x="5.7" y="14" width="2.5" height="2.7" fill="#21dada"/><rect x="6.2" y="14.6" width="1" height="1" fill="#fff"/><rect x="9" y="14" width="2.2" height="2.7" fill="#18cfd0"/><rect x="11.9" y="14" width="1.9" height="2.7" fill="#0c9a9c"/>
<rect x="5.8" y="17.5" width="2.4" height="2.5" fill="#22dede"/><rect x="8.9" y="17.5" width="2.2" height="2.5" fill="#16d6d6"/><rect x="11.8" y="17.5" width="2.1" height="2.5" fill="#18dcdc"/>
<rect x="15.2" y="11.4" width="1.7" height="2.8" fill="#0a7f82"/><rect x="15.2" y="15.2" width="1.7" height="3" fill="#0a7275"/>
<rect x="12.1" y="6.2" width="3.7" height="3" rx=".8" fill="#14b9bb"/><rect x="12.9" y="6" width="1.8" height="1" fill="#cfeff0"/><rect x="12.3" y="8.6" width="3.4" height="1" fill="#0a5f63"/>
<rect x="16.3" y="8.3" width="2.8" height="2.9" rx=".6" fill="#16b4b6"/><rect x="17.9" y="8.9" width="1.3" height="2.2" fill="#075458"/><rect x="16.8" y="8" width="1.4" height=".8" fill="#c8e8ea"/>
</g>
</svg>
<span class="t" style="left:22.10px;top:7.46px;transform:scaleX(0.9746) skewX(.05deg);">Éditeur du Registre</span>
<span class="t" style="left:9.00px;top:25.06px;transform:scaleX(0.9504) skewX(.05deg);">Fichier</span>
<span class="t" style="left:52.20px;top:25.06px;transform:scaleX(0.9969) skewX(.05deg);">Edition</span>
<span class="t" style="left:98.60px;top:25.06px;transform:scaleX(0.9956) skewX(.05deg);">Affichage</span>
<span class="t" style="left:157.00px;top:25.06px;transform:scaleX(0.9323) skewX(.05deg);">Favoris</span>
<span class="t" style="left:203.00px;top:25.06px;transform:scaleX(0.8008) skewX(.05deg);">?</span>
<div style="position:absolute;left:4.2px;top:42.6px;width:180.1px;height:570px;overflow:hidden;"><div style="position:absolute;left:-4.2px;top:-42.6px;">
<span class="t" style="left:17.90px;top:45.01px;transform:scaleX(0.8450) skewX(.05deg);">HKEY_CLASSES_ROOT</span>
<span class="t" style="left:17.90px;top:61.17px;transform:scaleX(0.8448) skewX(.05deg);">HKEY_CURRENT_USER</span>
<span class="t" style="left:34.60px;top:77.32px;transform:scaleX(0.9567) skewX(.05deg);">AppEvents</span>
<span class="t" style="left:34.60px;top:93.47px;transform:scaleX(0.9601) skewX(.05deg);">Console</span>
<span class="t" style="left:34.60px;top:109.63px;transform:scaleX(0.9771) skewX(.05deg);">Control Panel</span>
<span class="t" style="left:51.50px;top:125.78px;transform:scaleX(0.9704) skewX(.05deg);">Accessibility</span>
<span class="t" style="left:51.50px;top:141.93px;transform:scaleX(0.9689) skewX(.05deg);">Appearance</span>
<span class="t" style="left:51.50px;top:158.08px;transform:scaleX(1.0153) skewX(.05deg);">Bluetooth</span>
<span class="t" style="left:51.50px;top:174.24px;transform:scaleX(0.9646) skewX(.05deg);">Colors</span>
<span class="t" style="left:51.50px;top:190.39px;transform:scaleX(0.9407) skewX(.05deg);">Cursors</span>
<span class="t" style="left:51.50px;top:206.54px;transform:scaleX(0.9908) skewX(.05deg);color:#fff;">Desktop</span>
<span class="t" style="left:68.40px;top:222.70px;transform:scaleX(0.9646) skewX(.05deg);">Colors</span>
<span class="t" style="left:68.40px;top:238.85px;transform:scaleX(0.9922) skewX(.05deg);">LanguageConfiguration</span>
<span class="t" style="left:68.40px;top:255.00px;transform:scaleX(0.9764) skewX(.05deg);">MuiCached</span>
<span class="t" style="left:68.40px;top:271.16px;transform:scaleX(1.0076) skewX(.05deg);">WindowMetrics</span>
<span class="t" style="left:51.50px;top:287.31px;transform:scaleX(0.9973) skewX(.05deg);">Infrared</span>
<span class="t" style="left:51.50px;top:303.46px;transform:scaleX(1.0375) skewX(.05deg);">Input Method</span>
<span class="t" style="left:51.50px;top:319.61px;transform:scaleX(1.0104) skewX(.05deg);">International</span>
<span class="t" style="left:51.50px;top:335.77px;transform:scaleX(0.9758) skewX(.05deg);">Keyboard</span>
<span class="t" style="left:51.50px;top:351.92px;transform:scaleX(0.9918) skewX(.05deg);">Mouse</span>
<span class="t" style="left:51.50px;top:368.07px;transform:scaleX(0.9727) skewX(.05deg);">Personalization</span>
<span class="t" style="left:51.50px;top:384.23px;transform:scaleX(0.9640) skewX(.05deg);">PowerCfg</span>
<span class="t" style="left:51.50px;top:400.38px;transform:scaleX(0.9740) skewX(.05deg);">Sound</span>
<span class="t" style="left:34.60px;top:416.53px;transform:scaleX(0.9871) skewX(.05deg);">Environment</span>
<span class="t" style="left:34.60px;top:432.69px;transform:scaleX(0.8809) skewX(.05deg);">EUDC</span>
<span class="t" style="left:34.60px;top:448.84px;transform:scaleX(1.0057) skewX(.05deg);">Identities</span>
<span class="t" style="left:34.60px;top:464.99px;transform:scaleX(0.9763) skewX(.05deg);">Keyboard Layout</span>
<span class="t" style="left:34.60px;top:481.14px;transform:scaleX(1.0194) skewX(.05deg);">Network</span>
<span class="t" style="left:34.60px;top:497.30px;transform:scaleX(0.9660) skewX(.05deg);">Printers</span>
<span class="t" style="left:34.60px;top:513.45px;transform:scaleX(0.9744) skewX(.05deg);">Software</span>
<span class="t" style="left:34.60px;top:529.60px;transform:scaleX(0.9417) skewX(.05deg);">System</span>
<span class="t" style="left:34.60px;top:545.76px;transform:scaleX(0.9979) skewX(.05deg);">Volatile Environment</span>
<span class="t" style="left:17.90px;top:561.91px;transform:scaleX(0.8922) skewX(.05deg);">HKEY_LOCAL_MACHINE</span>
<span class="t" style="left:17.90px;top:578.06px;transform:scaleX(0.8297) skewX(.05deg);">HKEY_USERS</span>
<span class="t" style="left:17.90px;top:594.22px;transform:scaleX(0.8682) skewX(.05deg);">HKEY_CURRENT_CONFIG</span>
</div></div>
<span class="t" style="left:209.90px;top:46.46px;transform:scaleX(1.0324) skewX(.05deg);">Nom</span>
<span class="t" style="left:445.80px;top:46.46px;transform:scaleX(0.9706) skewX(.05deg);">Type</span>
<span class="t" style="left:556.00px;top:46.46px;transform:scaleX(0.9649) skewX(.05deg);">Données</span>
<span class="t" style="left:224.50px;top:64.46px;transform:scaleX(0.9914) skewX(.05deg);">(par défaut)</span>
<span class="t" style="left:446.00px;top:64.46px;transform:scaleX(0.8211) skewX(.05deg);">REG_SZ</span>
<span class="t" style="left:556.00px;top:64.46px;transform:scaleX(0.9899) skewX(.05deg);">(valeur non définie)</span>
<span class="t" style="left:224.50px;top:82.09px;transform:scaleX(0.9880) skewX(.05deg);">ActiveWndTrackTimeout</span>
<span class="t" style="left:446.00px;top:82.09px;transform:scaleX(0.8860) skewX(.05deg);">REG_DWORD</span>
<span class="t" style="left:556.00px;top:82.09px;transform:scaleX(0.9541) skewX(.05deg);">0x00000000 (0)</span>
<span class="t" style="left:224.50px;top:99.72px;transform:scaleX(0.9593) skewX(.05deg);">AutoEndTasks</span>
<span class="t" style="left:446.00px;top:99.72px;transform:scaleX(0.8211) skewX(.05deg);">REG_SZ</span>
<span class="t" style="left:556.00px;top:99.72px;transform:scaleX(0.9631) skewX(.05deg);">1</span>
<span class="t" style="left:224.50px;top:117.34px;transform:scaleX(0.9548) skewX(.05deg);">BlockSendInputResets</span>
<span class="t" style="left:446.00px;top:117.34px;transform:scaleX(0.8211) skewX(.05deg);">REG_SZ</span>
<span class="t" style="left:556.00px;top:117.34px;transform:scaleX(0.9631) skewX(.05deg);">0</span>
<span class="t" style="left:224.50px;top:134.97px;transform:scaleX(0.9946) skewX(.05deg);">CaretWidth</span>
<span class="t" style="left:446.00px;top:134.97px;transform:scaleX(0.8860) skewX(.05deg);">REG_DWORD</span>
<span class="t" style="left:556.00px;top:134.97px;transform:scaleX(0.9541) skewX(.05deg);">0x00000001 (1)</span>
<span class="t" style="left:224.50px;top:152.60px;transform:scaleX(0.9571) skewX(.05deg);">ClickLockTime</span>
<span class="t" style="left:446.00px;top:152.60px;transform:scaleX(0.8860) skewX(.05deg);">REG_DWORD</span>
<span class="t" style="left:556.00px;top:152.60px;transform:scaleX(0.9614) skewX(.05deg);">0x000004b0 (1200)</span>
<span class="t" style="left:224.50px;top:170.23px;transform:scaleX(0.9722) skewX(.05deg);">CoolSwitchColumns</span>
<span class="t" style="left:446.00px;top:170.23px;transform:scaleX(0.8211) skewX(.05deg);">REG_SZ</span>
<span class="t" style="left:556.00px;top:170.23px;transform:scaleX(0.9631) skewX(.05deg);">7</span>
<span class="t" style="left:224.50px;top:187.85px;transform:scaleX(0.9569) skewX(.05deg);">CoolSwitchRows</span>
<span class="t" style="left:446.00px;top:187.85px;transform:scaleX(0.8211) skewX(.05deg);">REG_SZ</span>
<span class="t" style="left:556.00px;top:187.85px;transform:scaleX(0.9631) skewX(.05deg);">3</span>
<span class="t" style="left:224.50px;top:205.48px;transform:scaleX(0.9524) skewX(.05deg);">CursorBlinkRate</span>
<span class="t" style="left:446.00px;top:205.48px;transform:scaleX(0.8211) skewX(.05deg);">REG_SZ</span>
<span class="t" style="left:556.00px;top:205.48px;transform:scaleX(0.9631) skewX(.05deg);">530</span>
<span class="t" style="left:224.50px;top:223.11px;transform:scaleX(1.0120) skewX(.05deg);">DockMoving</span>
<span class="t" style="left:446.00px;top:223.11px;transform:scaleX(0.8211) skewX(.05deg);">REG_SZ</span>
<span class="t" style="left:556.00px;top:223.11px;transform:scaleX(0.9631) skewX(.05deg);">1</span>
<span class="t" style="left:224.50px;top:240.73px;transform:scaleX(0.9810) skewX(.05deg);">DragFromMaximize</span>
<span class="t" style="left:446.00px;top:240.73px;transform:scaleX(0.8211) skewX(.05deg);">REG_SZ</span>
<span class="t" style="left:556.00px;top:240.73px;transform:scaleX(0.9631) skewX(.05deg);">1</span>
<span class="t" style="left:224.50px;top:258.36px;transform:scaleX(0.9822) skewX(.05deg);">DragFullWindows</span>
<span class="t" style="left:446.00px;top:258.36px;transform:scaleX(0.8211) skewX(.05deg);">REG_SZ</span>
<span class="t" style="left:556.00px;top:258.36px;transform:scaleX(0.9631) skewX(.05deg);">1</span>
<span class="t" style="left:224.50px;top:275.99px;transform:scaleX(1.0042) skewX(.05deg);">DragHeight</span>
<span class="t" style="left:446.00px;top:275.99px;transform:scaleX(0.8211) skewX(.05deg);">REG_SZ</span>
<span class="t" style="left:556.00px;top:275.99px;transform:scaleX(0.9631) skewX(.05deg);">4</span>
<span class="t" style="left:224.50px;top:293.61px;transform:scaleX(1.0127) skewX(.05deg);">DragWidth</span>
<span class="t" style="left:446.00px;top:293.61px;transform:scaleX(0.8211) skewX(.05deg);">REG_SZ</span>
<span class="t" style="left:556.00px;top:293.61px;transform:scaleX(0.9631) skewX(.05deg);">4</span>
<span class="t" style="left:224.50px;top:311.24px;transform:scaleX(0.9675) skewX(.05deg);">FeedbackToolEnabled</span>
<span class="t" style="left:446.00px;top:311.24px;transform:scaleX(0.8860) skewX(.05deg);">REG_DWORD</span>
<span class="t" style="left:556.00px;top:311.24px;transform:scaleX(0.9541) skewX(.05deg);">0x00000000 (0)</span>
<span class="t" style="left:224.50px;top:328.87px;transform:scaleX(0.9754) skewX(.05deg);">FocusBorderHeight</span>
<span class="t" style="left:446.00px;top:328.87px;transform:scaleX(0.8860) skewX(.05deg);">REG_DWORD</span>
<span class="t" style="left:556.00px;top:328.87px;transform:scaleX(0.9541) skewX(.05deg);">0x00000001 (1)</span>
<span class="t" style="left:224.50px;top:346.50px;transform:scaleX(0.9791) skewX(.05deg);">FocusBorderWidth</span>
<span class="t" style="left:446.00px;top:346.50px;transform:scaleX(0.8860) skewX(.05deg);">REG_DWORD</span>
<span class="t" style="left:556.00px;top:346.50px;transform:scaleX(0.9541) skewX(.05deg);">0x00000001 (1)</span>
<span class="t" style="left:224.50px;top:364.12px;transform:scaleX(1.0020) skewX(.05deg);">FontSmoothing</span>
<span class="t" style="left:446.00px;top:364.12px;transform:scaleX(0.8211) skewX(.05deg);">REG_SZ</span>
<span class="t" style="left:556.00px;top:364.12px;transform:scaleX(0.9631) skewX(.05deg);">2</span>
<span class="t" style="left:224.50px;top:381.75px;transform:scaleX(0.9864) skewX(.05deg);">FontSmoothingGamma</span>
<span class="t" style="left:446.00px;top:381.75px;transform:scaleX(0.8860) skewX(.05deg);">REG_DWORD</span>
<span class="t" style="left:556.00px;top:381.75px;transform:scaleX(0.9540) skewX(.05deg);">0x000003e8 (1000)</span>
<span class="t" style="left:224.50px;top:399.38px;transform:scaleX(1.0087) skewX(.05deg);">FontSmoothingOrientation</span>
<span class="t" style="left:446.00px;top:399.38px;transform:scaleX(0.8860) skewX(.05deg);">REG_DWORD</span>
<span class="t" style="left:556.00px;top:399.38px;transform:scaleX(0.9541) skewX(.05deg);">0x00000001 (1)</span>
<span class="t" style="left:224.50px;top:417.00px;transform:scaleX(0.9944) skewX(.05deg);">FontSmoothingType</span>
<span class="t" style="left:446.00px;top:417.00px;transform:scaleX(0.8860) skewX(.05deg);">REG_DWORD</span>
<span class="t" style="left:556.00px;top:417.00px;transform:scaleX(0.9541) skewX(.05deg);">0x00000002 (2)</span>
<span class="t" style="left:224.50px;top:434.63px;transform:scaleX(0.9745) skewX(.05deg);">ForegroundFlashCount</span>
<span class="t" style="left:446.00px;top:434.63px;transform:scaleX(0.8860) skewX(.05deg);">REG_DWORD</span>
<span class="t" style="left:556.00px;top:434.63px;transform:scaleX(0.9541) skewX(.05deg);">0x00000007 (7)</span>
<span class="t" style="left:224.50px;top:452.26px;transform:scaleX(0.9918) skewX(.05deg);">ForegroundLockTimeout</span>
<span class="t" style="left:446.00px;top:452.26px;transform:scaleX(0.8860) skewX(.05deg);">REG_DWORD</span>
<span class="t" style="left:556.00px;top:452.26px;transform:scaleX(0.9541) skewX(.05deg);">0x00000000 (0)</span>
<span class="t" style="left:224.50px;top:469.88px;transform:scaleX(1.0118) skewX(.05deg);">HungAppTimeout</span>
<span class="t" style="left:446.00px;top:469.88px;transform:scaleX(0.8211) skewX(.05deg);">REG_SZ</span>
<span class="t" style="left:556.00px;top:469.88px;transform:scaleX(0.9631) skewX(.05deg);">500</span>
<span class="t" style="left:224.50px;top:487.51px;transform:scaleX(0.9575) skewX(.05deg);">LeftOverlapChars</span>
<span class="t" style="left:446.00px;top:487.51px;transform:scaleX(0.8211) skewX(.05deg);">REG_SZ</span>
<span class="t" style="left:556.00px;top:487.51px;transform:scaleX(0.9631) skewX(.05deg);">3</span>
<span class="t" style="left:224.50px;top:505.14px;transform:scaleX(0.9385) skewX(.05deg);">LogPixels</span>
<span class="t" style="left:446.00px;top:505.14px;transform:scaleX(0.8860) skewX(.05deg);">REG_DWORD</span>
<span class="t" style="left:556.00px;top:505.14px;transform:scaleX(0.9554) skewX(.05deg);">0x00000078 (120)</span>
<span class="t" style="left:224.50px;top:522.77px;transform:scaleX(0.9770) skewX(.05deg);">LowLevelHooksTimeout</span>
<span class="t" style="left:446.00px;top:522.77px;transform:scaleX(0.8211) skewX(.05deg);">REG_SZ</span>
<span class="t" style="left:556.00px;top:522.77px;transform:scaleX(0.9631) skewX(.05deg);">500</span>
<span class="t" style="left:224.50px;top:540.39px;transform:scaleX(0.9743) skewX(.05deg);">MenuShowDelay</span>
<span class="t" style="left:446.00px;top:540.39px;transform:scaleX(0.8638) skewX(.05deg);">REG_EXPAND_SZ</span>
<span class="t" style="left:556.00px;top:540.39px;transform:scaleX(0.9631) skewX(.05deg);">0</span>
<span class="t" style="left:224.50px;top:558.02px;transform:scaleX(0.9829) skewX(.05deg);">PaintDesktopVersion</span>
<span class="t" style="left:446.00px;top:558.02px;transform:scaleX(0.8860) skewX(.05deg);">REG_DWORD</span>
<span class="t" style="left:556.00px;top:558.02px;transform:scaleX(0.9541) skewX(.05deg);">0x00000000 (0)</span>
<span class="t" style="left:224.50px;top:575.65px;transform:scaleX(0.9810) skewX(.05deg);">Pattern</span>
<span class="t" style="left:446.00px;top:575.65px;transform:scaleX(0.8860) skewX(.05deg);">REG_DWORD</span>
<span class="t" style="left:556.00px;top:575.65px;transform:scaleX(0.9541) skewX(.05deg);">0x00000000 (0)</span>
<span class="t" style="left:224.50px;top:593.27px;transform:scaleX(0.9628) skewX(.05deg);">RightOverlapChars</span>
<span class="t" style="left:446.00px;top:593.27px;transform:scaleX(0.8211) skewX(.05deg);">REG_SZ</span>
<span class="t" style="left:556.00px;top:593.27px;transform:scaleX(0.9631) skewX(.05deg);">3</span>
<span class="t" style="left:224.50px;top:610.90px;transform:scaleX(0.9342) skewX(.05deg);">ScreenSaveActive</span>
<span class="t" style="left:446.00px;top:610.90px;transform:scaleX(0.8211) skewX(.05deg);">REG_SZ</span>
<span class="t" style="left:556.00px;top:610.90px;transform:scaleX(0.9631) skewX(.05deg);">1</span>
<span class="t" style="left:4.40px;top:635.86px;transform:scaleX(1.0052) skewX(.05deg);">Ordinateur</span><span class="t" style="left:56.04px;top:635.86px;transform:scaleX(1.3919) skewX(.05deg);">\</span><span class="t" style="left:60.90px;top:635.86px;transform:scaleX(0.8448) skewX(.05deg);">HKEY_CURRENT_USER</span><span class="t" style="left:167.19px;top:635.86px;transform:scaleX(1.3919) skewX(.05deg);">\</span><span class="t" style="left:172.05px;top:635.86px;transform:scaleX(0.9771) skewX(.05deg);">Control Panel</span><span class="t" style="left:236.57px;top:635.86px;transform:scaleX(1.3919) skewX(.05deg);">\</span><span class="t" style="left:241.43px;top:635.86px;transform:scaleX(0.9908) skewX(.05deg);">Desktop</span>
</body></html>
